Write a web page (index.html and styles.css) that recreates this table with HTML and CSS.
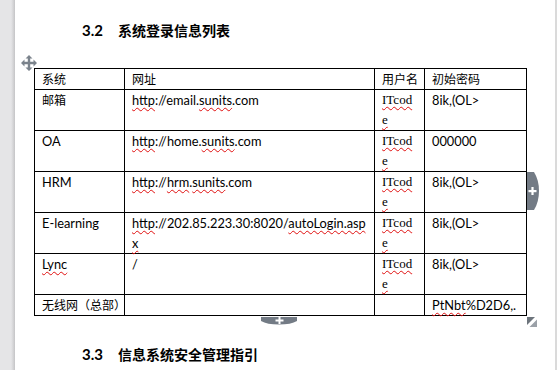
FILE: index.html
```html
<!DOCTYPE html>
<html lang="zh-CN">
<head>
<meta charset="utf-8">
<title>系统登录信息列表</title>
<link rel="stylesheet" href="styles.css">
</head>
<body>
<div class="app">
  <div class="gutter"></div>
  <div class="page">
    <h2 class="heading"><span class="num">3.2</span>系统登录信息列表</h2>
    <div class="table-wrap">
      <svg class="move-handle" width="16" height="16" viewBox="0 0 16 16"><path d="M8 0 L11.5 3.5 L9.2 3.5 L9.2 6.8 L12.5 6.8 L12.5 4.5 L16 8 L12.5 11.5 L12.5 9.2 L9.2 9.2 L9.2 12.5 L11.5 12.5 L8 16 L4.5 12.5 L6.8 12.5 L6.8 9.2 L3.5 9.2 L3.5 11.5 L0 8 L3.5 4.5 L3.5 6.8 L6.8 6.8 L6.8 3.5 L4.5 3.5 Z" fill="#7b838c"/></svg>
      <table class="info">
        <colgroup>
          <col class="c1"><col class="c2"><col class="c3"><col class="c4">
        </colgroup>
        <tr>
          <td><span class="zh">系统</span></td>
          <td><span class="zh">网址</span></td>
          <td><span class="zh">用户名</span></td>
          <td><span class="zh">初始密码</span></td>
        </tr>
        <tr>
          <td><span class="zh">邮箱</span></td>
          <td class="url"><span class="sp">http</span>://email.<span class="sp">sunits</span>.com</td>
          <td class="code"><span class="sp">ITcod</span><span class="sp">e</span></td>
          <td>8ik,(OL&gt;</td>
        </tr>
        <tr>
          <td>OA</td>
          <td class="url"><span class="sp">http</span>://home.<span class="sp">sunits</span>.com</td>
          <td class="code"><span class="sp">ITcod</span><span class="sp">e</span></td>
          <td>000000</td>
        </tr>
        <tr>
          <td>HRM</td>
          <td class="url"><span class="sp">http</span>://<span class="sp">hrm</span>.<span class="sp">sunits</span>.com</td>
          <td class="code"><span class="sp">ITcod</span><span class="sp">e</span></td>
          <td>8ik,(OL&gt;</td>
        </tr>
        <tr>
          <td>E-learning</td>
          <td class="url"><span class="sp">http</span>://202.85.223.30:8020/<span class="sp">autoLogin.asp</span><span class="sp">x</span></td>
          <td class="code"><span class="sp">ITcod</span><span class="sp">e</span></td>
          <td>8ik,(OL&gt;</td>
        </tr>
        <tr>
          <td><span class="sp">Lync</span></td>
          <td class="url">/</td>
          <td class="code"><span class="sp">ITcod</span><span class="sp">e</span></td>
          <td>8ik,(OL&gt;</td>
        </tr>
        <tr>
          <td class="nowrap"><span class="zh">无线网（总部）</span></td>
          <td></td>
          <td></td>
          <td><span class="sp">PtNbt</span>%D2D6,.</td>
        </tr>
      </table>
      <svg class="tab-right" width="12" height="38" viewBox="0 0 12 38"><path d="M0 0 H7 Q12 8 12 19 Q12 30 7 38 H0 Z" fill="#737b85"/><rect x="1.5" y="18" width="8" height="2.2" fill="#fff"/><rect x="4.4" y="15" width="2.2" height="8" fill="#fff"/></svg>
      <svg class="tab-bottom" width="36" height="8" viewBox="0 0 36 8"><path d="M0 0 H36 V4 Q30 7.5 18 7.5 Q6 7.5 0 4 Z" fill="#737b85"/><rect x="14.5" y="2.5" width="8" height="2" fill="#fff"/><rect x="17.5" y="0" width="2" height="7" fill="#fff"/></svg>
      <svg class="resize" width="10" height="10" viewBox="0 0 10 10"><path d="M0 0 H8 L0 8 Z" fill="#6d747c"/><path d="M10 2.5 V10 H2.5 Z" fill="#9ba1a8"/></svg>
    </div>
    <h2 class="heading second"><span class="num">3.3</span>信息系统安全管理指引</h2>
  </div>
  <div class="rightline"></div>
</div>
</body>
</html>
```

FILE: styles.css
```css
html, body {
  margin: 0;
  padding: 0;
  background: #ffffff;
}
body {
  width: 558px;
  height: 370px;
  overflow: hidden;
  font-family: "Lato", "Noto Sans CJK SC", sans-serif;
  color: #000;
}
.app {
  display: flex;
  height: 370px;
}
.gutter {
  width: 15px;
  flex: none;
  background: linear-gradient(to right, #e5e5e7 0, #e5e5e7 11px, #d6d6d8 13px, #c4c4c6 15px);
}
.page {
  width: 540px;
  flex: none;
  background: #fff;
}
.rightline {
  width: 2px;
  flex: none;
  background: #dadada;
}
.heading {
  margin: 0;
  padding: 20px 0 0 67px;
  height: 20px;
  line-height: 20px;
  font-size: 14px;
  font-weight: 700;
  font-family: "Lato", "Noto Sans CJK SC", sans-serif;
  white-space: nowrap;
}
.heading .num {
  display: inline-block;
  width: 36px;
  font-size: 15px;
}
.heading.second {
  padding-top: 28px;
}
.table-wrap {
  position: relative;
  margin: 28px 0 0 19px;
  width: 492px;
}
.info {
  border-collapse: collapse;
  table-layout: fixed;
  width: 492px;
  font-size: 12.8px;
}
.info col.c1 { width: 90px; }
.info col.c2 { width: 250px; }
.info col.c3 { width: 50px; }
.info col.c4 { width: 102px; }
.info td {
  border: 1px solid #000;
  padding: 0 6px 0 7px;
  line-height: 20px;
  vertical-align: top;
  height: 20px;
}
.info .zh {
  font-family: "Noto Sans CJK SC", sans-serif;
  font-size: 12px;
}
.info td.url {
  word-break: break-all;
}
.info td.code {
  font-family: "Liberation Serif", serif;
  font-size: 13px;
  word-break: break-all;
  padding-right: 8px;
}
.info td.nowrap {
  white-space: nowrap;
  padding-right: 0;
}
.sp {
  text-decoration: underline wavy #e01010;
  text-decoration-thickness: 1px;
  text-underline-offset: 2px;
}
.move-handle {
  position: absolute;
  left: -13px;
  top: -13px;
}
.tab-right {
  position: absolute;
  left: 493px;
  top: 104px;
}
.tab-bottom {
  position: absolute;
  left: 227px;
  top: 249px;
}
.resize {
  position: absolute;
  left: 493px;
  top: 249px;
}
```
